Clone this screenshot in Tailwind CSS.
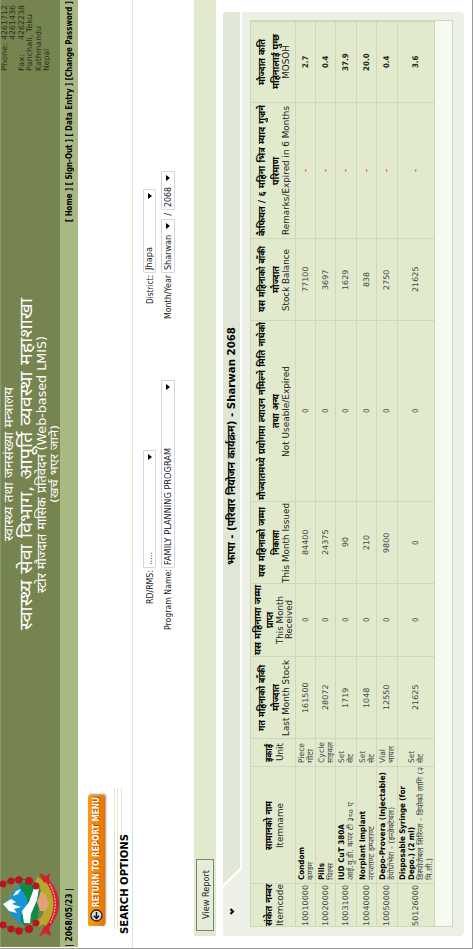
<!DOCTYPE html>
<html lang="ne"><head><meta charset="utf-8"><title>LMIS</title>
<script src="https://cdn.jsdelivr.net/npm/@tailwindcss/browser@4"></script></head>
<body class="bg-white">
<div class="w-[473px] h-[949px] relative overflow-hidden font-['DejaVu_Sans','Noto_Sans',sans-serif] text-black">
<div class="w-[949px] h-[473px] origin-top-left [transform:rotate(-90deg)_translateX(-949px)] flex flex-col whitespace-nowrap bg-white border-l border-b border-[#999]">

<header class="relative h-[60px] shrink-0 bg-[#76854f] border-t border-[#8b9868] ml-px">
  <svg class="absolute left-[9px] top-[-1px] w-[70px] h-[60px]" viewBox="0 0 70 60">
    <path d="M13 22 L18 16 L27 8 L34 3 L40 10 L47 14 L55 21 L52 28 L17 28Z" fill="#1696d8"/>
    <path d="M27 9l7-6 5 8-3 5-2-4-3 9-2-7-4 3zM42 13l5 3 2 5-5-3z" fill="#fff"/>
    <path d="M12 25 Q19 17 28 24 T46 23 T56 26 L50 40 L20 38Z" fill="#0d8b43"/>
    <path d="M15 24 L27 22 L36 29 L50 34 L50 39 L38 37 L24 31 L15 30Z" fill="#fff"/>
    <path d="M11 38 Q17 53 35 54 T61 37 L55 35 Q50 43 35 44 T17 36Z" fill="#b6a92c"/>
    <path d="M27 40 L36 37 L47 41 L43 46 L34 49 L27 45Z" fill="#e3a17b"/>
    <path d="M1 39l8 4q26 19 48 0l8-4-3 7 3 4-7-1q-23 20-48 0l-8 2 3-6z" fill="#d61f2c"/>
    <path d="M12 46 Q34 61 56 46 L54 43 Q34 56 14 43Z" fill="#b6a92c"/>
    <path d="M15 50q20 11 40-1" stroke="#f3b4a8" stroke-width="1.2" stroke-dasharray="2 1" fill="none"/>
    <path d="M13 3Q3 20 15 38M54 3Q64 20 53 38" stroke="#1d7a3a" stroke-width="1.5" fill="none"/>
    <g fill="#b9141f"><circle cx="13" cy="3" r="3.4"/><circle cx="9" cy="11" r="3.6"/><circle cx="7" cy="19" r="3.8"/><circle cx="9" cy="29" r="4"/><circle cx="15" cy="36" r="3.5"/><circle cx="54" cy="3" r="3.4"/><circle cx="57" cy="11" r="3.6"/><circle cx="58" cy="19" r="3.8"/><circle cx="57" cy="29" r="4"/><circle cx="52" cy="36" r="3.5"/></g>
  </svg>
  <div class="absolute inset-x-0 left-[18px] top-0 text-white text-center">
    <div class="h-[14px] leading-[16px] text-[12px]"><span data-w="154">स्वास्थ्य तथा जनसंख्या मन्त्रालय</span></div>
    <div class="h-[21px] leading-[21px] text-[18px]"><span data-w="332">स्वास्थ्य सेवा विभाग, आपूर्ति व्यवस्था महाशाखा</span></div>
    <div class="h-[13px] leading-[12px] text-[12px]"><span data-w="257">स्टोर मौज्दात मासिक प्रतिवेदन (Web-based LMIS)</span></div>
    <div class="h-[12px] leading-[12px] text-[11px]"><span data-w="78">(खर्च भएर जाने)</span></div>
  </div>
  <div class="absolute left-[876px] top-[-0.5px] text-[7.8px] leading-[8.5px] text-[#2a301c]">
    <div class="flex justify-between w-[66px]"><span data-w="28">Phone:</span><span data-w="35">4261712</span></div>
    <div class="flex justify-end w-[66px]"><span data-w="35">4261436</span></div>
    <div class="flex justify-between w-[66px]"><span data-w="17">Fax:</span><span data-w="35">4262238</span></div>
    <div><span data-w="57">Panchali, Teku</span></div>
    <div><span data-w="45">Kathmandu</span></div>
    <div><span data-w="22">Nepal</span></div>
  </div>
</header>

<nav class="h-[18px] shrink-0 bg-[#a9b984] ml-px pr-px flex justify-between items-center font-bold text-[8px] leading-[18px] pt-[2px]">
  <span data-w="59">| 2068/05/23 |</span>
  <span data-w="221">[ Home ] [ Sign-Out ] [ Data Entry ] [Change Password ]</span>
</nav>

<section class="h-[55px] shrink-0 border-b border-[#dde7c9] pl-[12px] relative">
  <div class="ml-[10px] mt-[9.5px] h-[17px] w-[131px] rounded-[2px] bg-gradient-to-b from-[#f79a1c] via-[#f68a0b] to-[#e67300] shadow-[1px_1px_2px_#999] flex items-center pl-[4px] gap-[2px] text-white font-bold">
    <svg class="w-[13px] h-[13px] shrink-0" viewBox="0 0 13 13"><circle cx="6.5" cy="6.5" r="5.5" fill="#ddd" stroke="#222" stroke-width="1.3"/><path d="M10 6.500H3.500M6.300 3.800L3.500 6.500l2.800 2.700" stroke="#111" stroke-width="1.5" fill="none"/></svg>
    <span class="text-[9px] leading-[16px] [text-shadow:1px_1px_1px_#a04f00]" data-w="110">RETURN TO REPORT MENU</span>
  </div>
  <div class="mt-[9px] ml-[7px] w-[141px] h-[8px] border-y border-[#dfe8cb] flex items-center"><i class="block w-full h-px bg-[#dfe8cb]"></i></div>
  <h2 class="absolute left-[14px] top-[40px] leading-[13px] text-[11px] font-bold"><span data-w="100">SEARCH OPTIONS</span></h2>
</section>

<section class="h-[61px] shrink-0 pt-[10px] text-[8px] text-[#222]">
  <div class="h-[18px] flex items-start">
    <div class="w-[380px] flex justify-end pr-[2px] leading-[15px]"><span data-w="34">RD/RMS:</span></div>
    <div class="w-[118px] h-[13px] border border-[#d3d6de] rounded-[1px] flex items-center justify-between pl-[2px] pr-[3px]"><span data-w="13">.....</span><i class="w-0 h-0 border-x-[3px] border-x-transparent border-t-[4.5px] border-t-black"></i></div>
    <div class="w-[177px] flex justify-end pr-[2px] leading-[15px]"><span data-w="29">District:</span></div>
    <div class="w-[84px] h-[13px] border border-[#d3d6de] rounded-[1px] flex items-center justify-between pl-[2px] pr-[3px]"><span class="pt-px" data-w="23">Jhapa</span><i class="w-0 h-0 border-x-[3px] border-x-transparent border-t-[4.5px] border-t-black"></i></div>
  </div>
  <div class="h-[18px] flex items-start">
    <div class="w-[380px] flex justify-end pr-px leading-[15px]"><span data-w="61">Program Name:</span></div>
    <div class="w-[188px] h-[14px] border border-[#d3d6de] rounded-[1px] flex items-center justify-between pl-[2px] pr-[3px]"><span class="pt-px" data-w="117">FAMILY PLANNING PROGRAM</span><i class="w-0 h-0 border-x-[3px] border-x-transparent border-t-[4.5px] border-t-black"></i></div>
    <div class="w-[107px] flex justify-end pr-[2px] leading-[15px]"><span data-w="44">Month/Year</span></div>
    <div class="w-[54px] h-[14px] border border-[#d3d6de] rounded-[1px] flex items-center justify-between pl-[2px] pr-[3px]"><span class="pt-px" data-w="35">Sharwan</span><i class="w-0 h-0 border-x-[3px] border-x-transparent border-t-[4.5px] border-t-black"></i></div>
    <div class="w-[9px] text-center leading-[15px]">/</div>
    <div class="w-[39px] h-[14px] border border-[#d3d6de] rounded-[1px] flex items-center justify-between pl-[2px] pr-[3px]"><span class="pt-px" data-w="20">2068</span><i class="w-0 h-0 border-x-[3px] border-x-transparent border-t-[4.5px] border-t-black"></i></div>
  </div>
</section>

<div class="h-[22px] shrink-0 ml-[12px] bg-[#e1eacd] pl-[5px] flex items-center">
  <div class="w-[72px] h-[18px] border border-[#7d8570] bg-[#e6ecda] flex items-center justify-center pt-[2px] text-[8.5px] text-[#222]"><span data-w="49">View Report</span></div>
</div>

<section class="mt-[7px] ml-[12px] w-[924px] h-[241px] shrink-0 rounded-[4px] overflow-hidden bg-[#edf0e6]">
  <div class="h-[17px] relative bg-[#e1e7d7] flex justify-center items-center pl-[56px]">
    <svg class="absolute left-0 top-0 w-[70px] h-[19px]" viewBox="0 0 70 19"><path d="M0 0H49L67 18V19H0Z" fill="#edf0e6"/><path d="M49 -1L67.500 18" stroke="#fff" stroke-width="2.500"/><path d="M22 7.500l2.500 2.500 2.500-2.500" stroke="#000" stroke-width="2" fill="none"/></svg>
    <h3 class="font-bold text-[11px] leading-[17px]"><span data-w="238">झापा - (परिबार नियोजन कार्यक्रम) - Sharwan 2068</span></h3>
  </div>
  <div class="h-[2px] bg-white ml-[66px]"></div>
  <div class="mt-[8px] ml-[9px] w-[907px] h-[203px] bg-[#f7faef] border border-[#cfd8ba]">
    <div id="grid" class="grid grid-cols-[43px_117px_28px_82px_73px_82px_181px_82px_136px_81px] grid-rows-[45px_20px_20px_21px_20px_21px_37px] bg-[#e1eacd] text-center"></div>
  </div>
</section>
</div></div>
<script>
const heads=[
 [['संकेत नम्बर',42],['Itemcode',42]],
 [['सामानको नाम',49],['Itemname',45]],
 [['इकाई',18],['Unit',18]],
 [['गत महिनाको बाँकी',66],['मौज्दात',27],['Last Month Stock',76]],
 [['यस महिनामा जम्मा',70],['प्राप्त',16],['This Month',48],['Received',39]],
 [['यस महिनाको जम्मा',70],['निकासा',25],['This Month Issued',80]],
 [['मौज्दातमध्ये प्रयोगमा ल्याउन नमिल्ने मिति नाघेको',178],['तथा अन्य',34],['Not Useable/Expired',91]],
 [['यस महिनाको बाँकी',66],['मौज्दात',27],['Stock Balance',62]],
 [['कैफियत / ६ महिना भित्र म्याद गुज्रने',131],['परिमाण',28],['Remarks/Expired in 6 Months',129]],
 [['मौज्दात कति',46],['महिनालाई पुग्छ',55],['MOSOH',34]]];
const rows=[
 ['10010000',[['Condom',33,1],['कण्डम',18]],[['Piece',20],['गोटा',14]],'161500','0','84400','0','77100','-','2.7'],
 ['10020000',[['Pills',17,1],['पिल्स',17]],[['Cycle',21],['साइकल',21]],'28072','0','24375','0','3697','-','0.4'],
 ['10031000',[['IUD CuT 380A',56,1],['आई.यु.डी. कपर टी ३८० ए',78]],[['Set',12],['सेट',9]],'1719','0','90','0','1629','-','37.9'],
 ['10040000',[['Norplant Implant',69,1],['नरप्लाण्ट इम्प्लाण्ट',54]],[['Set',12],['सेट',9]],'1048','0','210','0','838','-','20.0'],
 ['10050000',[['Depo-Provera (Injectable)',108,1],['डेपोप्रोभेरा - (इन्जेक्टेबल)',73]],[['Vial',14],['भायल',17]],'12550','0','9800','0','2750','-','0.4'],
 ['50126000',[['Disposable Syringe (for',94,1],['Depo.) (2 ml)',53,1],['डिस्पोजेबल सिरिन्ज - डिपोको लागि (२',113],['मि.ली.)',22]],[['Set',12],['सेट',9]],'21625','0','0','0','21625','-','3.6']];
const line=(t,w,c)=>`<div class="${c}"><span data-w="${w}">${t}</span></div>`;
const dev=t=>/[\u0900-\u097f]/.test(t);
let h='';
heads.forEach(c=>{h+='<div class="border-r border-b border-[#cfd8ba] flex flex-col justify-center">'+c.map(([t,w])=>line(t,w,dev(t)?(c.length>3?'font-bold text-[9px] leading-[11.5px]':'font-bold text-[9.5px] leading-[13.5px]'):'text-[9.5px] leading-[9.5px] -mt-[1px] text-[#222]')).join('')+'</div>'});
rows.forEach(r=>r.forEach((c,i)=>{
 const b='border-r border-b border-[#cfd8ba] flex flex-col justify-center text-[7.8px] ';
 if(Array.isArray(c)) h+=`<div class="${b} items-start pl-[3px]">`+c.map(([t,w,k])=>line(t,w,(k?'font-bold text-black':'text-[#444]')+' leading-[9px]')).join('')+'</div>';
 else {const w=c==='-'?3:c.replace('.','').length*5.2+(c.includes('.')?2.5:0)-(c.length>1?0.5:0.8);
 h+=`<div class="${b} ${i===9?'font-bold text-[#222]':i===8?'text-[#f33] font-bold':'text-[#444]'}">`+line(c,w,'leading-[10px]')+'</div>';}
}));
document.getElementById('grid').innerHTML=h;
/* Fit each label to its measure */
function fit(){document.querySelectorAll('[data-w]').forEach(e=>{
 e.style.display='inline-block';e.style.flexShrink='0';e.style.marginRight='0';
 const n=parseFloat(getComputedStyle(e).width),w=+e.dataset.w;
 e.style.transformOrigin='left';e.style.transform=`scaleX(${w/n})`;e.style.marginRight=(w-n)+'px';
});}
fit();
addEventListener('load',()=>{fit();requestAnimationFrame(fit);setTimeout(fit,60);});
</script>
</body></html>
